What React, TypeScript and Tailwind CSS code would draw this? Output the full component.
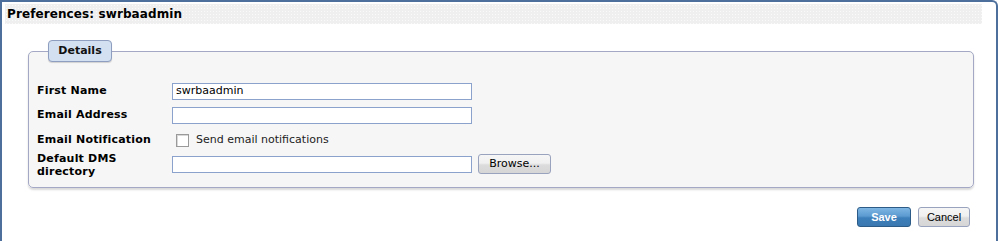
import React from "react";

const font = { fontFamily: '"DejaVu Sans", Tahoma, sans-serif' };

export default function App() {
  return (
    <div className="w-[998px] h-[241px] bg-white overflow-hidden" style={font}>
      <div className="h-[241px] border-l-2 border-t-2 border-r-2 border-[#4d6f9c] rounded-tr-[6px] pl-[3px] pr-[14px] pt-[2px]">
        <div className="h-[20px] bg-[#efefef] bg-[radial-gradient(#fafafa_0.6px,transparent_0.8px)] bg-[length:3px_3px] flex items-center pl-[2px] text-[12px] font-bold text-black tracking-[0.1px]">
          Preferences: swrbaadmin
        </div>
        <fieldset className="mt-[16px] ml-[23px] mr-[8px] h-[148px] border border-[#a4a8c4] rounded-[5px] bg-[#f6f6f6] shadow-[0_2px_2px_rgba(0,0,0,0.15)] pl-[8px] pr-2">
          <legend className="ml-[11px] h-[22px] w-[64px] flex items-center justify-center bg-[#d3e0f1] border border-[#8e9ec0] rounded-[4px] text-[11px] font-bold text-[#111] shadow-[0_1px_1px_rgba(0,0,0,0.15)]">
            Details
          </legend>
          <div className="pt-[21px] flex flex-col text-[11px] text-black">
            <div className="flex items-center h-[17px]">
              <div className="w-[135px] font-bold tracking-[0.2px]">First Name</div>
              <div className="w-[300px] h-[17px] border border-[#8aa2cc] bg-white px-[3px] flex items-center text-[11px]">swrbaadmin</div>
            </div>
            <div className="flex items-center h-[17px] mt-[7px]">
              <div className="w-[135px] font-bold tracking-[0.2px]">Email Address</div>
              <div className="w-[300px] h-[17px] border border-[#8aa2cc] bg-white" />
            </div>
            <div className="flex items-center h-[17px] mt-[8px]">
              <div className="w-[135px] font-bold tracking-[0.2px]">Email Notification</div>
              <div className="ml-[4px] w-[13px] h-[13px] border border-[#9a9a9a] bg-white shadow-[inset_1px_1px_0_#d8d8d8]" />
              <div className="ml-[7px] text-[#222]">Send email notifications</div>
            </div>
            <div className="flex items-center h-[20px] mt-[5px]">
              <div className="w-[135px] font-bold leading-[13px] pt-[2px] tracking-[0.2px]">Default DMS<br />directory</div>
              <div className="w-[300px] h-[17px] border border-[#8aa2cc] bg-white mt-[1px]" />
              <button className="ml-[6px] w-[73px] h-[20px] border border-[#9aa3bd] rounded-[3px] bg-[linear-gradient(#f6f6f6,#f0f0f0_45%,#dcdcdc_55%,#d6d6d6)] text-[11px] text-black flex items-center justify-center">
                Browse...
              </button>
            </div>
          </div>
        </fieldset>
        <div className="flex justify-end gap-[7px] mt-[19px] pr-[12px]">
          <button className="w-[54px] h-[20px] rounded-[3px] border border-[#2b5b86] bg-[linear-gradient(#7fb6e4,#5b9ad0_45%,#3d7fba_55%,#3a78b0)] text-[11px] font-bold text-white flex items-center justify-center" style={{ fontFamily: '"Liberation Sans", Arial, sans-serif' }}>
            Save
          </button>
          <button className="w-[52px] h-[20px] rounded-[3px] border border-[#9aa3bd] bg-[linear-gradient(#f6f6f6,#f0f0f0_45%,#dcdcdc_55%,#d6d6d6)] text-[11px] text-black flex items-center justify-center" style={{ fontFamily: '"Liberation Sans", Arial, sans-serif' }}>
            Cancel
          </button>
        </div>
      </div>
    </div>
  );
}
